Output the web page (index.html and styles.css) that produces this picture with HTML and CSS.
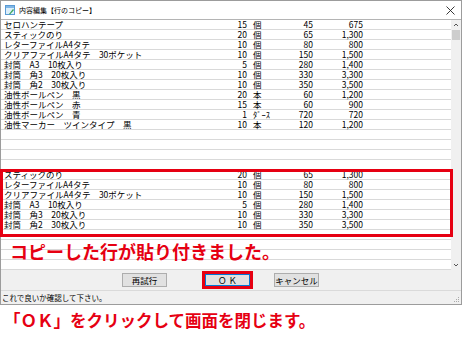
FILE: index.html
```html
<!DOCTYPE html>
<html lang="ja">
<head>
    <meta charset="UTF-8">
    <title>内容編集【行のコピー】</title>
    <link rel="stylesheet" href="styles.css">
</head>
<body>
<div class="window">
    <div class="titlebar">
        <svg class="app-icon" width="10" height="10" viewBox="0 0 10 10">
            <rect x="0.5" y="0.5" width="9" height="9" fill="#dbeefa" stroke="#5a9bd4"/>
            <rect x="1" y="1" width="8" height="2" fill="#7fb6e6"/>
            <path d="M4 9 L8 4 L9 5 L5 9.5 Z" fill="#3aa657"/>
        </svg>
        <span class="title">内容編集【行のコピー】</span>
        <svg class="close" width="9" height="9" viewBox="0 0 9 9">
            <path d="M0.5 0.5 L8.5 8.5 M8.5 0.5 L0.5 8.5" stroke="#222" stroke-width="0.9"/>
        </svg>
    </div>
    <div class="main">
        <div class="list">
            <div class="row"><span>セロハンテープ</span><span class="num">15</span><span>個</span><span class="num">45</span><span class="num">675</span></div>
            <div class="row"><span>スティックのり</span><span class="num">20</span><span>個</span><span class="num">65</span><span class="num">1,300</span></div>
            <div class="row"><span>レターファイルA4タテ</span><span class="num">10</span><span>個</span><span class="num">80</span><span class="num">800</span></div>
            <div class="row"><span>クリアファイルA4タテ　30ポケット</span><span class="num">10</span><span>個</span><span class="num">150</span><span class="num">1,500</span></div>
            <div class="row"><span>封筒　A3　10枚入り</span><span class="num">5</span><span>個</span><span class="num">280</span><span class="num">1,400</span></div>
            <div class="row"><span>封筒　角3　20枚入り</span><span class="num">10</span><span>個</span><span class="num">330</span><span class="num">3,300</span></div>
            <div class="row"><span>封筒　角2　30枚入り</span><span class="num">10</span><span>個</span><span class="num">350</span><span class="num">3,500</span></div>
            <div class="row"><span>油性ボールペン　黒</span><span class="num">20</span><span>本</span><span class="num">60</span><span class="num">1,200</span></div>
            <div class="row"><span>油性ボールペン　赤</span><span class="num">15</span><span>本</span><span class="num">60</span><span class="num">900</span></div>
            <div class="row"><span>油性ボールペン　青</span><span class="num">1</span><span>ﾀﾞｰｽ</span><span class="num">720</span><span class="num">720</span></div>
            <div class="row"><span>油性マーカー　ツインタイプ　黒</span><span class="num">10</span><span>本</span><span class="num">120</span><span class="num">1,200</span></div>
            <div class="row"></div>
            <div class="row"></div>
            <div class="row"></div>
            <div class="row"></div>
            <div class="row"><span>スティックのり</span><span class="num">20</span><span>個</span><span class="num">65</span><span class="num">1,300</span></div>
            <div class="row"><span>レターファイルA4タテ</span><span class="num">10</span><span>個</span><span class="num">80</span><span class="num">800</span></div>
            <div class="row"><span>クリアファイルA4タテ　30ポケット</span><span class="num">10</span><span>個</span><span class="num">150</span><span class="num">1,500</span></div>
            <div class="row"><span>封筒　A3　10枚入り</span><span class="num">5</span><span>個</span><span class="num">280</span><span class="num">1,400</span></div>
            <div class="row"><span>封筒　角3　20枚入り</span><span class="num">10</span><span>個</span><span class="num">330</span><span class="num">3,300</span></div>
            <div class="row"><span>封筒　角2　30枚入り</span><span class="num">10</span><span>個</span><span class="num">350</span><span class="num">3,500</span></div>
            <div class="row"></div>
            <div class="row"></div>
            <div class="row"></div>
            <div class="row"></div>
        </div>
        <div class="scrollbar">
            <svg class="arrow" width="10" height="10" viewBox="0 0 10 10">
                <path d="M3 6 L5 4 L7 6" fill="none" stroke="#555" stroke-width="1"/>
            </svg>
            <div class="thumb"></div>
            <div class="track"></div>
            <svg class="arrow" width="10" height="10" viewBox="0 0 10 10">
                <path d="M3 4 L5 6 L7 4" fill="none" stroke="#555" stroke-width="1"/>
            </svg>
        </div>
        <div class="highlight"></div>
        <p class="notice">コピーした行が貼り付きました。</p>
    </div>
    <div class="buttons">
        <button class="btn retry">再試行</button>
        <div class="ok-mark"><button class="btn ok">Ｏ Ｋ</button></div>
        <button class="btn cancel">キャンセル</button>
    </div>
    <div class="status">
        <span>これで良いか確認して下さい。</span>
        <svg class="grip" width="6" height="6" viewBox="0 0 6 6">
            <rect x="4" y="0" width="1" height="1" fill="#aaa"/>
            <rect x="2" y="2" width="1" height="1" fill="#aaa"/>
            <rect x="4" y="2" width="1" height="1" fill="#aaa"/>
            <rect x="0" y="4" width="1" height="1" fill="#aaa"/>
            <rect x="2" y="4" width="1" height="1" fill="#aaa"/>
            <rect x="4" y="4" width="1" height="1" fill="#aaa"/>
        </svg>
    </div>
</div>
<p class="caption">「ＯＫ」をクリックして画面を閉じます。</p>
</body>
</html>
```
FILE: styles.css
```css
body {
    margin: 0;
    background: #ffffff;
    font-family: "Noto Sans CJK JP", "Liberation Sans", sans-serif;
    color: #000;
}
.window {
    width: 462px;
    box-sizing: border-box;
    border: 1px solid #9c9c9c;
    background: #f0f0f0;
}
.titlebar {
    height: 18px;
    background: #ffffff;
    display: flex;
    align-items: center;
    padding-left: 4px;
}
.app-icon {
    flex: none;
}
.title {
    font-size: 7px;
    margin-left: 4px;
    flex: 1;
}
.close {
    margin-right: 6px;
}
.main {
    position: relative;
    display: flex;
    border-top: 1px solid #b4b4b4;
    height: 250px;
}
.list {
    flex: 1;
    background: #ffffff;
}
.row {
    height: 10px;
    box-sizing: border-box;
    border-bottom: 1px solid #d9d9d9;
    display: grid;
    grid-template-columns: 224px 19px 40px 26px 50px;
    padding-left: 3px;
    font-size: 8.5px;
    line-height: 9px;
    white-space: nowrap;
}
.row span:nth-child(3) {
    padding-left: 6px;
}
.num {
    text-align: right;
}
.scrollbar {
    width: 10px;
    background: #f0f0f0;
    display: flex;
    flex-direction: column;
}
.arrow {
    display: block;
}
.thumb {
    height: 10px;
    margin: 0 1px;
    background: #cdcdcd;
}
.track {
    flex: 1;
}
.highlight {
    position: absolute;
    left: -1px;
    top: 149px;
    width: 453px;
    height: 68px;
    box-sizing: border-box;
    border: 3px solid #e60012;
}
.notice {
    position: absolute;
    left: 9px;
    top: 220px;
    margin: 0;
    font-size: 18px;
    line-height: 22px;
    font-weight: bold;
    color: #e60012;
}
.buttons {
    height: 20px;
    display: flex;
    align-items: center;
}
.btn {
    font-family: inherit;
    font-size: 8.5px;
    height: 14px;
    padding: 0;
    background: #e1e1e1;
    border: 1px solid #adadad;
    line-height: 12px;
}
.retry {
    width: 45px;
    margin-left: 121px;
}
.ok-mark {
    margin-left: 35px;
    width: 51px;
    height: 18px;
    box-sizing: border-box;
    border: 3px solid #e60012;
    display: flex;
}
.ok {
    flex: 1;
    height: 12px;
    border: 1px solid #0078d7;
    line-height: 10px;
}
.cancel {
    width: 45px;
    margin-left: 21px;
}
.status {
    height: 13px;
    border-top: 1px solid #dadada;
    display: flex;
    align-items: center;
    justify-content: space-between;
    padding-left: 1px;
    font-size: 7.5px;
}
.grip {
    margin: 4px 1px 0 0;
}
.caption {
    margin: 4px 0 0 4px;
    font-size: 16.5px;
    line-height: 22px;
    font-weight: bold;
    color: #e60012;
}
```
